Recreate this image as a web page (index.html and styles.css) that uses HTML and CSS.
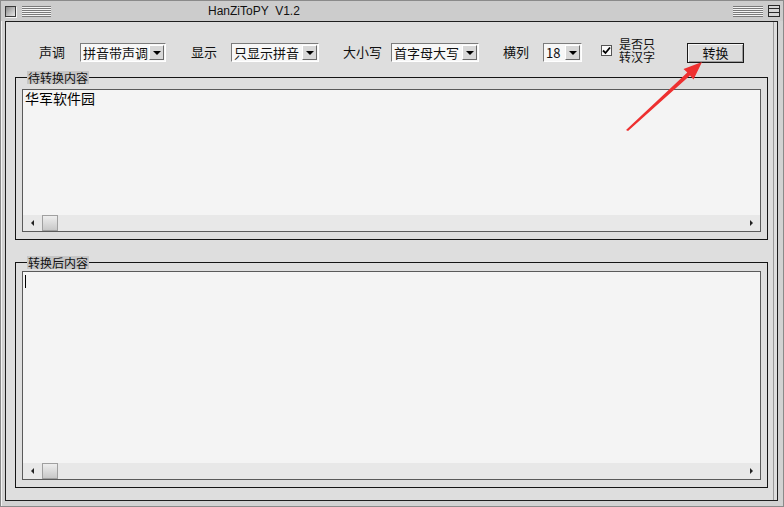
FILE: index.html
```html
<!DOCTYPE html>
<html lang="zh-CN">
<head>
    <meta charset="UTF-8">
    <title>HanZiToPY V1.2</title>
    <link rel="stylesheet" href="styles.css">
</head>
<body>

    <div class="window">
        <!-- タイトルバー -->
        <div class="titlebar">
            <span class="close-box"></span>
            <span class="stripes stripes-left"></span>
            <span class="title">HanZiToPY  V1.2</span>
            <span class="stripes stripes-right"></span>
            <span class="shade-box"><i></i></span>
        </div>

        <div class="frame">
            <!-- 設定行 -->
            <div class="toolbar">
                <span class="lbl">声调</span>
                <div class="combo combo-tone"><span class="combo-text">拼音带声调</span><span class="combo-btn"></span></div>
                <span class="lbl lbl-show">显示</span>
                <div class="combo combo-show"><span class="combo-text">只显示拼音</span><span class="combo-btn"></span></div>
                <span class="lbl lbl-case">大小写</span>
                <div class="combo combo-case"><span class="combo-text">首字母大写</span><span class="combo-btn"></span></div>
                <span class="lbl lbl-cols">横列</span>
                <div class="combo combo-cols"><span class="combo-text">18</span><span class="combo-btn"></span></div>
                <span class="checkbox">
                    <svg width="9" height="9" viewBox="0 0 9 9"><path d="M1 4.5 L3.5 7 L8 1.5" fill="none" stroke="#000" stroke-width="1.8"/></svg>
                </span>
                <span class="check-label">是否只<br>转汉字</span>
                <button class="convert-button">转换</button>
            </div>

            <!-- 変換前 -->
            <div class="group group-src">
                <span class="legend">待转换内容</span>
                <div class="textbox">
                    <div class="textbox-body">华军软件园</div>
                    <div class="hscroll">
                        <span class="arrow-left"><i></i></span>
                        <span class="thumb"></span>
                        <span class="track"></span>
                        <span class="arrow-right"><i></i></span>
                    </div>
                </div>
            </div>

            <!-- 変換後 -->
            <div class="group group-dst">
                <span class="legend">转换后内容</span>
                <div class="textbox">
                    <div class="textbox-body"><span class="caret"></span></div>
                    <div class="hscroll">
                        <span class="arrow-left"><i></i></span>
                        <span class="thumb"></span>
                        <span class="track"></span>
                        <span class="arrow-right"><i></i></span>
                    </div>
                </div>
            </div>
        </div>

        <!-- 注釈の赤い矢印 -->
        <svg class="annotation" width="784" height="507" viewBox="0 0 784 507">
            <polygon points="626,130 628,131 690,75.6 693.5,79.5 702,62 683.5,69 687.3,72.6" fill="#ee3030"/>
        </svg>
    </div>

</body>
</html>
```

FILE: styles.css
```css
/* 全体 */
body {
    margin: 0;
    font-family: "Noto Sans CJK SC", "Liberation Sans", sans-serif;
    background-color: #d4d4d4;
}

.window {
    position: relative;
    width: 784px;
    height: 507px;
    box-sizing: border-box;
    border: 1px solid #8a8a8a;
    background-color: #d2d2d2;
    box-shadow: inset 1px 1px 0 #f2f2f2;
}

/* タイトルバー */
.titlebar {
    height: 20px;
    display: flex;
    align-items: center;
    background-color: #cccccc;
}

.close-box {
    width: 9px;
    height: 9px;
    margin-left: 4px;
    border: 1px solid #3a3a3a;
    background: linear-gradient(135deg, #8c8c8c, #e8e8e8);
    box-shadow: 1px 1px 0 #f4f4f4;
}

.stripes {
    height: 11px;
    background: repeating-linear-gradient(to bottom, #7a7a7a 0 1px, #f4f4f4 1px 2px);
}

.stripes-left {
    width: 29px;
    margin-left: 6px;
}

.title {
    margin-left: 157px;
    flex: 1;
    font-family: "Liberation Sans", sans-serif;
    font-size: 12px;
    color: #111;
    white-space: pre;
}

.stripes-right {
    width: 30px;
}

.shade-box {
    position: relative;
    width: 10px;
    height: 10px;
    margin-left: 5px;
    margin-right: 3px;
    border: 1px solid #2a2a2a;
    background-color: #d6d6d6;
}

.shade-box::before,
.shade-box i {
    position: absolute;
    left: 0;
    right: 0;
    height: 1px;
    background-color: #2a2a2a;
    content: "";
}

.shade-box::before { top: 2px; }
.shade-box i { top: 6px; }

/* メインの枠 */
.frame {
    height: 480px;
    margin: 0 5px 0 4px;
    box-sizing: border-box;
    border: 1px solid #1e1e1e;
    background-color: #dedede;
    box-shadow: inset -3px 0 0 #dedede, inset -4px 0 0 #9a9a9a;
    display: flex;
    flex-direction: column;
}

/* 設定行 */
.toolbar {
    height: 25px;
    margin-top: 18px;
    padding-left: 33px;
    display: flex;
    align-items: center;
    font-size: 13px;
    color: #111;
}

.lbl {
    line-height: 16px;
    margin-bottom: 1px;
    white-space: nowrap;
}

.lbl-show { margin-left: 25px; }
.lbl-case { margin-left: 24px; }
.lbl-cols { margin-left: 24px; }

.combo {
    height: 19px;
    box-sizing: border-box;
    border-top: 1px solid #7c7c7c;
    border-left: 1px solid #7c7c7c;
    border-right: 1px solid #ffffff;
    border-bottom: 1px solid #ffffff;
    background-color: #f7f7f7;
    display: flex;
    align-items: center;
    justify-content: space-between;
}

.combo-tone { width: 86px; margin-left: 15px; }
.combo-show { width: 88px; margin-left: 14px; }
.combo-case { width: 88px; margin-left: 9px; }
.combo-cols { width: 39px; margin-left: 14px; }

.combo-text {
    padding-left: 2px;
    font-size: 13px;
    line-height: 16px;
    white-space: nowrap;
}

.combo-btn {
    width: 15px;
    height: 15px;
    margin-right: 1px;
    box-sizing: border-box;
    border-top: 1px solid #ffffff;
    border-left: 1px solid #ffffff;
    border-right: 1px solid #6a6a6a;
    border-bottom: 1px solid #6a6a6a;
    background-color: #d8d8d8;
    display: flex;
    justify-content: center;
    align-items: center;
}

.combo-btn::after {
    width: 0;
    height: 0;
    border-left: 4px solid transparent;
    border-right: 4px solid transparent;
    border-top: 4px solid #000;
    content: "";
}

.checkbox {
    width: 11px;
    height: 11px;
    margin-left: 19px;
    margin-bottom: 5px;
    box-sizing: border-box;
    border: 1px solid #555;
    background-color: #fafafa;
    display: flex;
    justify-content: center;
    align-items: center;
}

.check-label {
    margin-left: 7px;
    margin-bottom: 5px;
    font-size: 12px;
    line-height: 13px;
    white-space: nowrap;
}

.convert-button {
    width: 57px;
    height: 20px;
    margin-left: 32px;
    padding: 0;
    border: 1px solid #1a1a1a;
    background-color: #dcdcdc;
    box-shadow: inset 1px 1px 0 #f6f6f6, inset -1px -1px 0 #9c9c9c;
    font-family: "Noto Sans CJK SC", sans-serif;
    font-size: 13px;
    line-height: 16px;
    color: #111;
}

/* グループ枠 */
.group {
    position: relative;
    margin: 0 9px;
    border: 1px solid #141414;
    box-sizing: border-box;
    display: flex;
}

.group-src {
    height: 163px;
    margin-top: 12px;
    padding: 11px 6px 7px 6px;
}

.group-dst {
    height: 226px;
    margin-top: 22px;
    padding: 8px 6px 7px 6px;
}

.legend {
    position: absolute;
    top: -7px;
    left: 11px;
    padding: 0 1px;
    font-size: 12px;
    line-height: 13px;
    color: #111;
    background-color: #c6c6c6;
}

/* テキストエリア */
.textbox {
    flex: 1;
    box-sizing: border-box;
    border: 1px solid #5a5a5a;
    background-color: #f4f4f4;
    display: flex;
    flex-direction: column;
}

.textbox-body {
    flex: 1;
    padding: 0 2px;
    font-size: 14px;
    line-height: 16px;
    color: #000;
}

.caret {
    display: inline-block;
    width: 1px;
    height: 13px;
    margin-top: 3px;
    background-color: #000;
}

.hscroll {
    height: 16px;
    background-color: #e8e8e8;
    display: flex;
    align-items: center;
}

.arrow-left {
    width: 19px;
    display: flex;
    justify-content: center;
}

.arrow-left i {
    width: 0;
    height: 0;
    border-top: 3px solid transparent;
    border-bottom: 3px solid transparent;
    border-right: 3px solid #222;
}

.thumb {
    width: 14px;
    height: 14px;
    border: 1px solid #a0a0a0;
    background: linear-gradient(to bottom, #eeeeee, #c8c8c8);
}

.track {
    flex: 1;
}

.arrow-right {
    width: 18px;
    display: flex;
    justify-content: center;
}

.arrow-right i {
    width: 0;
    height: 0;
    border-top: 3px solid transparent;
    border-bottom: 3px solid transparent;
    border-left: 3px solid #222;
}

/* 注釈 */
.annotation {
    position: absolute;
    top: -1px;
    left: -1px;
    pointer-events: none;
}
```
